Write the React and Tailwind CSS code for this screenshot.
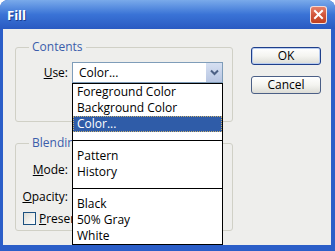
import React from 'react';

const items = [
    { label: 'Foreground Color' },
    { label: 'Background Color' },
    { label: 'Color...', active: true },
    { sep: true },
    { label: 'Pattern' },
    { label: 'History' },
    { sep: true },
    { label: 'Black' },
    { label: '50% Gray' },
    { label: 'White' },
];

const XpButton = ({ children, primary }) => (
    <div
        className={`w-[70px] h-[18px] flex items-center justify-center rounded-[3px] border bg-gradient-to-b from-white via-[#f4f4f0] to-[#dcdcd6] text-black ${primary ? 'border-[#1f3f8a] shadow-[inset_0_0_0_1px_#b8ccf0]' : 'border-[#4b5f86]'}`}
    >
        {children}
    </div>
);

const App = () => {
    return (
        <div
            className="relative w-[335px] h-[251px] flex flex-col rounded-t-[8px] overflow-hidden bg-[#2b5ec8] text-[12px] leading-[16px] text-black"
            style={{ fontFamily: '"Open Sans", "DejaVu Sans", sans-serif' }}
        >
            {/* Title bar */}
            <div className="h-[29px] flex items-center justify-between pl-[7px] pr-[8px] bg-gradient-to-b from-[#7aaaea] via-[#3a73d6] to-[#2a5ac2]">
                <span className="text-white font-bold text-[13px] [text-shadow:1px_1px_0_#1b3f8f]">Fill</span>
                <div className="w-[17px] h-[18px] rounded-[3px] border border-white/80 bg-gradient-to-b from-[#e6806a] via-[#d2553a] to-[#c0401f] flex items-center justify-center">
                    <svg width="11" height="11" viewBox="0 0 11 11">
                        <path d="M2 2 L9 9 M9 2 L2 9" stroke="white" strokeWidth="2" strokeLinecap="square" />
                    </svg>
                </div>
            </div>

            {/* Body */}
            <div className="flex-1 ml-[3px] mr-[4px] mb-[6px] bg-[#eeeeec] flex pt-[10px] pl-[12px]">
                <div className="w-[218px] flex flex-col">
                    <fieldset className="border border-[#d0d0c6] rounded-[3px] pb-[38px]">
                        <legend className="ml-[13px] px-[3px] text-[#3b5dab]">Contents</legend>
                        <div className="mt-[7px] flex items-center h-[21px]">
                            <span className="w-[52px] text-right"><u>U</u>se:</span>
                            <div className="ml-[4px] w-[151px] h-[21px] bg-white border border-[#7f9db9] flex items-center justify-between">
                                <span className="pl-[6px]">Color...</span>
                                <div className="w-[16px] h-[19px] bg-gradient-to-b from-[#d6e0f2] to-[#b8c6e2] flex items-center justify-center">
                                    <svg width="9" height="7" viewBox="0 0 9 7">
                                        <path d="M1 1.5 L4.5 5 L8 1.5" stroke="#4d6185" strokeWidth="2" fill="none" />
                                    </svg>
                                </div>
                            </div>
                        </div>
                    </fieldset>

                    <fieldset className="mt-[13px] border border-[#d0d0c6] rounded-[3px] pb-[5px]">
                        <legend className="ml-[13px] px-[3px] text-[#3b5dab]">Blending</legend>
                        <div className="mt-[8px] flex items-center h-[21px]">
                            <span className="w-[52px] text-right"><u>M</u>ode:</span>
                        </div>
                        <div className="mt-[6px] flex items-center h-[21px]">
                            <span className="w-[52px] text-right"><u>O</u>pacity:</span>
                        </div>
                        <div className="mt-[5px] flex items-center h-[13px] pl-[7px]">
                            <div className="w-[13px] h-[13px] border border-[#1c5180] bg-gradient-to-br from-[#dcdcd5] to-white" />
                            <span className="ml-[3px] whitespace-nowrap"><u>P</u>reser</span>
                        </div>
                    </fieldset>
                </div>

                <div className="ml-[18px] mt-[8px] flex flex-col gap-[11px]">
                    <XpButton primary>OK</XpButton>
                    <XpButton>Cancel</XpButton>
                </div>
            </div>

            {/* Open dropdown list */}
            <div className="absolute left-[72px] top-[83px] w-[151px] h-[162px] bg-white border border-black flex flex-col">
                {items.map((it, i) =>
                    it.sep ? (
                        <div key={i} className="h-[16px] flex items-center">
                            <div className="w-full h-px bg-black" />
                        </div>
                    ) : (
                        <div
                            key={i}
                            className={`h-[16px] pl-[4px] flex items-center ${it.active ? 'bg-[#2f5ca8] text-white outline outline-1 outline-dotted outline-[#c8b070] -outline-offset-1' : ''}`}
                        >
                            {it.label}
                        </div>
                    )
                )}
            </div>
        </div>
    );
};

export default App;
